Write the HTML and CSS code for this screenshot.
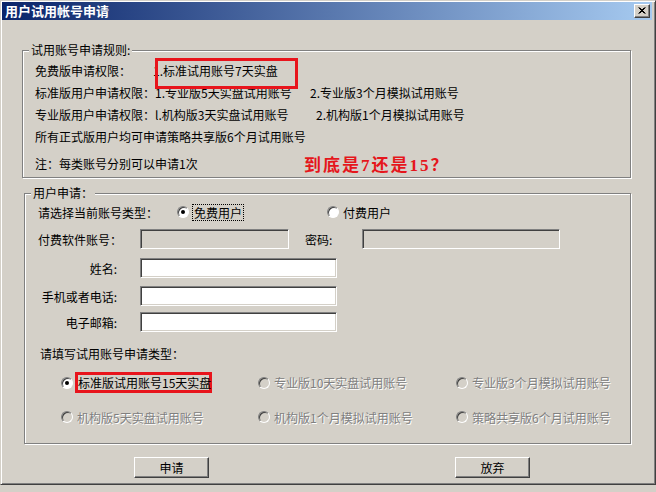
FILE: index.html
```html
<!DOCTYPE html>
<html lang="zh-CN">
<head>
  <meta charset="UTF-8">
  <title>用户试用帐号申请</title>
  <link rel="stylesheet" href="styles.css">
</head>
<body>
  <div class="window">
    <div class="titlebar">
      <span class="title">用户试用帐号申请</span>
      <span class="close-btn">
        <svg width="16" height="14" viewBox="0 0 16 14">
          <path d="M4.5 3.5 L10.5 9.5 M5.5 3.5 L11.5 9.5 M10.5 3.5 L4.5 9.5 M11.5 3.5 L5.5 9.5" stroke="#000" stroke-width="1" fill="none"/>
        </svg>
      </span>
    </div>

    <div class="content">
      <!-- rules -->
      <div class="group rules">
        <span class="legend">试用账号申请规则:</span>
        <div class="rule-grid">
          <span>免费版申请权限：</span>
          <span class="span-2"><span class="hl">1.标准试用账号7天实盘</span></span>

          <span>标准版用户申请权限：</span>
          <span>1.专业版5天实盘试用账号</span>
          <span>2.专业版3个月模拟试用账号</span>

          <span>专业版用户申请权限：</span>
          <span>l.机构版3天实盘试用账号</span>
          <span class="shift">2.机构版1个月模拟试用账号</span>

          <span class="span-all">所有正式版用户均可申请策略共享版6个月试用账号</span>
        </div>
        <div class="note-row">
          <span class="note">注：每类账号分别可以申请1次</span>
          <span class="question">到底是7还是15？</span>
        </div>
      </div>

      <!-- apply -->
      <div class="group apply">
        <span class="legend">用户申请：</span>

        <div class="form-row type-row">
          <span class="type-label">请选择当前账号类型：</span>
          <label class="opt first">
            <span class="radio checked"></span>
            <span class="focus">免费用户</span>
          </label>
          <label class="opt">
            <span class="radio"></span>
            <span>付费用户</span>
          </label>
        </div>

        <div class="form-row row-account">
          <span class="field-label left">付费软件账号：</span>
          <span class="input disabled w-account"></span>
          <span class="pwd-label">密码:</span>
          <span class="input disabled w-pwd"></span>
        </div>

        <div class="form-row row-name">
          <span class="field-label">姓名:</span>
          <span class="input w-field"></span>
        </div>

        <div class="form-row row-phone">
          <span class="field-label">手机或者电话:</span>
          <span class="input w-field"></span>
        </div>

        <div class="form-row row-mail">
          <span class="field-label">电子邮箱:</span>
          <span class="input w-field"></span>
        </div>

        <div class="section-label">请填写试用账号申请类型：</div>

        <div class="opt-grid">
          <label class="opt row-1">
            <span class="radio checked"></span>
            <span class="hl-label">标准版试用账号15天实盘</span>
          </label>
          <label class="opt row-1 off">
            <span class="radio"></span>
            <span>专业版10天实盘试用账号</span>
          </label>
          <label class="opt row-1 off">
            <span class="radio"></span>
            <span>专业版3个月模拟试用账号</span>
          </label>
          <label class="opt row-2 off">
            <span class="radio"></span>
            <span>机构版5天实盘试用账号</span>
          </label>
          <label class="opt row-2 off">
            <span class="radio"></span>
            <span>机构版1个月模拟试用账号</span>
          </label>
          <label class="opt row-2 off">
            <span class="radio"></span>
            <span>策略共享版6个月试用账号</span>
          </label>
        </div>
      </div>

      <div class="buttons">
        <button class="btn">申请</button>
        <button class="btn">放弃</button>
      </div>
    </div>
  </div>
</body>
</html>
```

FILE: styles.css
```css
* {
  margin: 0;
  padding: 0;
  box-sizing: border-box;
}

body {
  background: #d4d0c8;
  font-family: "Noto Sans CJK SC", sans-serif;
  font-size: 12px;
  color: #000;
}

/* Window frame */
.window {
  width: 656px;
  height: 485px;
  border: 1px solid;
  border-color: #d4d0c8 #404040 #404040 #d4d0c8;
  box-shadow: inset 1px 1px 0 #fff, inset -1px -1px 0 #808080;
  padding: 1px 3px 0 1px;
  background: #d4d0c8;
}

.titlebar {
  height: 18px;
  display: flex;
  align-items: center;
  justify-content: space-between;
  padding: 0 2px 0 3px;
  background: linear-gradient(to right, #0a246a, #a6caf0);
}

.title {
  color: #fff;
  font-weight: bold;
  font-size: 13px;
  line-height: 18px;
}

.close-btn {
  display: block;
  width: 16px;
  height: 14px;
  background: #d4d0c8;
  border: 1px solid;
  border-color: #fff #404040 #404040 #fff;
  box-shadow: inset -1px -1px 0 #808080;
}

.close-btn svg {
  display: block;
  margin: -1px 0 0 -1px;
}

.content {
  padding-left: 20px;
}

/* Group boxes */
.group {
  position: relative;
  border: 1px solid #808080;
  box-shadow: 1px 1px 0 #fff, inset 1px 1px 0 #fff;
}

.legend {
  position: absolute;
  top: -8px;
  left: 6px;
  padding: 0 2px;
  line-height: 14px;
  background: #d4d0c8;
}

.rules {
  width: 609px;
  margin-top: 30px;
  padding: 8px 0 3px 12px;
}

.rule-grid {
  display: grid;
  grid-template-columns: 120px 155px auto;
  grid-auto-rows: 22px;
  align-items: center;
}

.span-2 {
  grid-column: span 2;
}

.span-all {
  grid-column: 1 / -1;
}

.shift {
  margin-left: 6px;
}

/* the red frame sits over the leading "1" */
.hl {
  position: relative;
  display: inline-block;
  margin-left: -2px;
}

.hl::after {
  content: "";
  position: absolute;
  left: 2px;
  top: -4px;
  width: 137px;
  height: 25px;
  border: 3px solid #e8141c;
}

.note-row {
  display: flex;
  align-items: center;
  height: 22px;
  margin-top: 5px;
}

.note {
  width: 269px;
}

.question {
  color: #e5161c;
  font-family: "Liberation Serif", "Noto Sans CJK SC", serif;
  font-weight: bold;
  font-size: 17px;
  letter-spacing: 2px;
  line-height: 22px;
  margin-top: 6px;
}

.apply {
  width: 607px;
  margin: 15px 0 0 2px;
  padding: 8px 0 16px 13px;
}

/* Form rows */
.form-row {
  display: flex;
  align-items: center;
  height: 20px;
}

.type-label {
  width: 139px;
}

.opt {
  display: flex;
  align-items: center;
  gap: 4px;
}

.opt.first {
  width: 150px;
}

.focus {
  outline: 1px dotted #000;
  line-height: 15px;
  padding: 0 1px;
}

.row-account { margin-top: 7px; }
.row-name { margin-top: 9px; }
.row-phone { margin-top: 8px; }
.row-mail { margin-top: 6px; }

.field-label {
  width: 102px;
  padding-right: 23px;
  text-align: right;
}

.field-label.left {
  text-align: left;
  padding-right: 0;
}

.pwd-label {
  width: 57px;
  margin-left: 16px;
}

.input {
  display: block;
  height: 20px;
  background: #fff;
  border: 1px solid;
  border-color: #808080 #fff #fff #808080;
  box-shadow: inset 1px 1px 0 #404040, inset -1px -1px 0 #d4d0c8;
}

.input.disabled {
  background: #d4d0c8;
}

.w-account { width: 149px; }
.w-pwd { width: 198px; }
.w-field { width: 197px; }

.section-label {
  margin: 12px 0 0 2px;
  line-height: 20px;
}

/* Radio options */
.opt-grid {
  display: grid;
  grid-template-columns: 197px 198px auto;
  padding-left: 23px;
  margin-top: 8px;
}

.opt.row-1 {
  height: 21px;
}

.opt.row-2 {
  height: 20px;
  margin-top: 14px;
}

.opt.off {
  color: #808080;
  text-shadow: 1px 1px 0 #fff;
}

.radio {
  position: relative;
  flex: none;
  width: 12px;
  height: 12px;
  border-radius: 50%;
  background: #fff;
  border: 1px solid;
  border-color: #808080 #fff #fff #808080;
  box-shadow: inset 1px 1px 0 #404040;
}

.off .radio {
  background: #d4d0c8;
}

.radio.checked::after {
  content: "";
  position: absolute;
  left: 3px;
  top: 3px;
  width: 4px;
  height: 4px;
  border-radius: 50%;
  background: #000;
}

.hl-label {
  width: 137px;
  height: 21px;
  margin-left: -2px;
  border: 3px solid #e8141c;
  line-height: 15px;
  white-space: nowrap;
}

/* Buttons */
.buttons {
  display: flex;
  gap: 246px;
  padding-left: 112px;
  margin-top: 13px;
}

.btn {
  width: 75px;
  height: 21px;
  background: #d4d0c8;
  font-family: "Noto Sans CJK SC", sans-serif;
  font-size: 12px;
  color: #000;
  border: 1px solid;
  border-color: #fff #404040 #404040 #fff;
  box-shadow: inset -1px -1px 0 #808080;
}
```
